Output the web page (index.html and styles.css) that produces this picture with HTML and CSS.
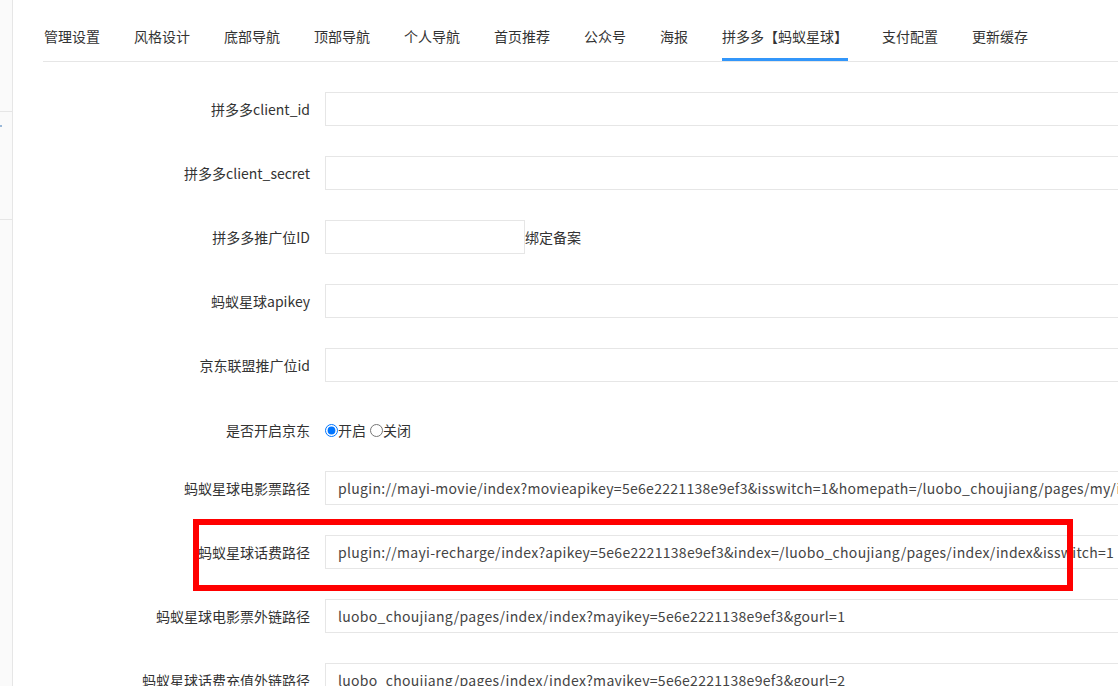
FILE: index.html
```html
<!doctype html>
<html>
<head>
<meta charset="utf-8">
<title>系统设置</title>
	<link rel="stylesheet" href="styles.css">
</head>

<body>
	<div class="layout">
	<div class="side">
		<div class="side-item s1"></div>
		<div class="side-item s2"><span class="dot"></span></div>
	</div>
	<div class="main">
		<ul class="tabs">
			<li>管理设置</li>
			<li>风格设计</li>
			<li>底部导航</li>
			<li>顶部导航</li>
			<li>个人导航</li>
			<li>首页推荐</li>
			<li>公众号</li>
			<li>海报</li>
			<li class="active">拼多多【蚂蚁星球】</li>
			<li>支付配置</li>
			<li>更新缓存</li>
		</ul>
		<form class="form">
			<div class="row">
				<label class="label">拼多多client_id</label>
				<input type="text" class="input" value="">
			</div>
			<div class="row">
				<label class="label">拼多多client_secret</label>
				<input type="text" class="input" value="">
			</div>
			<div class="row">
				<label class="label">拼多多推广位ID</label>
				<input type="text" class="input short" value="">
				<span class="aside">绑定备案</span>
			</div>
			<div class="row">
				<label class="label">蚂蚁星球apikey</label>
				<input type="text" class="input" value="">
			</div>
			<div class="row">
				<label class="label">京东联盟推广位id</label>
				<input type="text" class="input" value="">
			</div>
			<div class="row radio-row">
				<label class="label">是否开启京东</label>
				<span class="radios">
					<input type="radio" name="jd" id="jd_on" checked><label for="jd_on">开启</label>
					<input type="radio" name="jd" id="jd_off"><label for="jd_off">关闭</label>
				</span>
			</div>
			<div class="row">
				<label class="label">蚂蚁星球电影票路径</label>
				<input type="text" class="input" value="plugin://mayi-movie/index?movieapikey=5e6e2221138e9ef3&amp;isswitch=1&amp;homepath=/luobo_choujiang/pages/my/index">
			</div>
			<div class="row">
				<label class="label">蚂蚁星球话费路径</label>
				<input type="text" class="input" value="plugin://mayi-recharge/index?apikey=5e6e2221138e9ef3&amp;index=/luobo_choujiang/pages/index/index&amp;isswitch=1">
				<div class="mark"></div>
			</div>
			<div class="row">
				<label class="label">蚂蚁星球电影票外链路径</label>
				<input type="text" class="input" value="luobo_choujiang/pages/index/index?mayikey=5e6e2221138e9ef3&amp;gourl=1">
			</div>
			<div class="row">
				<label class="label">蚂蚁星球话费充值外链路径</label>
				<input type="text" class="input" value="luobo_choujiang/pages/index/index?mayikey=5e6e2221138e9ef3&amp;gourl=2">
			</div>
		</form>
	</div>
	</div>
</body>
</html>
```

FILE: styles.css
```css
*{box-sizing: border-box;}
html,body{
	margin: 0;
	height: 100%;
	overflow: hidden;
	background: #fff;
}
body{
	font-family: "Microsoft YaHei","Noto Sans CJK SC",sans-serif;
	font-size: 14px;
	color: #333;
}
.layout{
	display: flex;
	height: 100vh;
}
.side{
	width: 13px;
	flex-shrink: 0;
	background: #fafafa;
	border-right: 1px solid #e6e6e6;
}
.side-item{
	border-bottom: 1px solid #e6e6e6;
	position: relative;
}
.s1{height: 112px;}
.s2{height: 108px;}
.dot{
	position: absolute;
	left: 0;
	top: 13px;
	width: 2px;
	height: 2px;
	background: #9ab8d8;
}
.main{
	flex: 1;
	padding-left: 30px;
	min-width: 0;
}
.tabs{
	list-style-type: none;
	margin: 0;
	padding: 0 0 0 1px;
	display: flex;
	border-bottom: 1px solid #e6e6e6;
	white-space: nowrap;
}
.tabs li{
	line-height: 20px;
	padding: 26px 0 12px;
	margin-right: 34px;
	border-bottom: 3px solid transparent;
	cursor: pointer;
}
.tabs li.active{
	border-bottom-color: #3296fa;
}
.form{
	padding-top: 30px;
	margin: 0;
}
.row{
	display: flex;
	align-items: center;
	height: 34px;
	margin-bottom: 30px;
	position: relative;
	white-space: nowrap;
}
.label{
	width: 282px;
	flex-shrink: 0;
	padding-right: 15px;
	text-align: right;
	line-height: 20px;
}
.input{
	height: 34px;
	width: 900px;
	flex-shrink: 0;
	border: 1px solid #e6e6e6;
	padding: 0 12px;
	font-family: inherit;
	font-size: 14px;
	letter-spacing: 0.3px;
	color: #444;
	outline: none;
	background: #fff;
}
.input.short{
	width: 200px;
}
.aside{
	line-height: 20px;
}
.radio-row{
	height: 29px;
	align-items: flex-start;
	padding-top: 8px;
}
.radios{
	display: flex;
	align-items: center;
	line-height: 20px;
}
.radios input{
	margin: 0;
	width: 13px;
	height: 13px;
}
.radios label{
	margin-right: 4px;
}
.mark{
	position: absolute;
	left: 150px;
	top: -16px;
	width: 880px;
	height: 72px;
	border: 6px solid #ff0000;
}
```
